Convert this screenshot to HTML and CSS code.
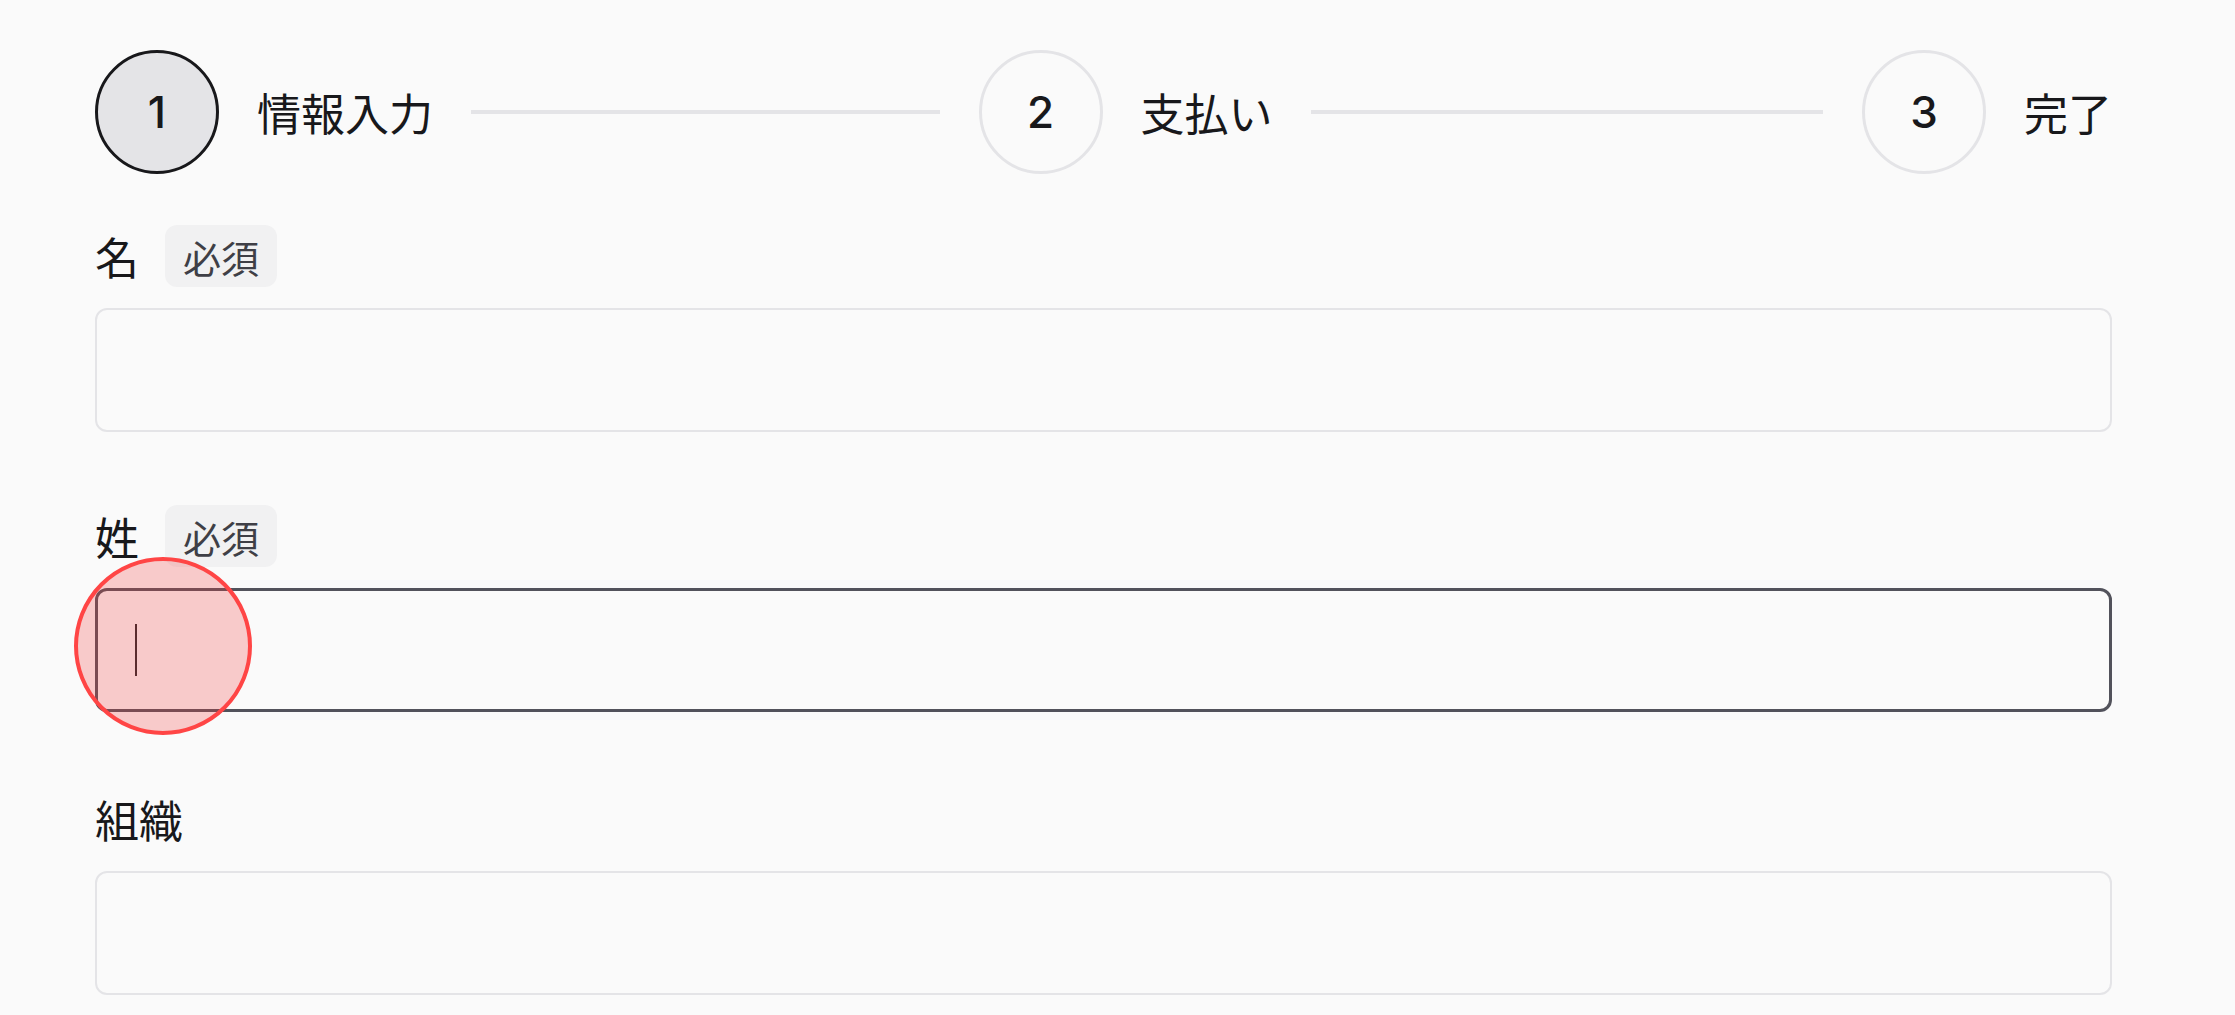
FILE: index.html
```html
<!DOCTYPE html>
<html lang="ja">
<head>
<meta charset="utf-8">
<title>情報入力</title>
<link rel="stylesheet" href="styles.css">
</head>
<body>
<div class="page">
  <div class="stepper">
    <div class="step">
      <div class="step-circle active">1</div>
      <div class="step-label">情報入力</div>
      <div class="step-line"></div>
    </div>
    <div class="step">
      <div class="step-circle">2</div>
      <div class="step-label">支払い</div>
      <div class="step-line"></div>
    </div>
    <div class="step last">
      <div class="step-circle">3</div>
      <div class="step-label">完了</div>
    </div>
  </div>

  <form class="form">
    <div class="field">
      <div class="field-label"><span class="label-text">名</span><span class="badge">必須</span></div>
      <div class="input"></div>
    </div>
    <div class="field field-focused">
      <div class="field-label"><span class="label-text">姓</span><span class="badge">必須</span></div>
      <div class="input focused"><span class="caret"></span><span class="touch"></span></div>
    </div>
    <div class="field">
      <div class="field-label"><span class="label-text">組織</span></div>
      <div class="input"></div>
    </div>
  </form>
</div>
</body>
</html>
```
FILE: styles.css
```css
* { box-sizing: border-box; }
html, body { margin: 0; padding: 0; }
body {
  background: #fafafa;
  color: #18181b;
  font-family: "Noto Sans CJK JP", "Noto Sans", sans-serif;
  overflow: hidden;
}
.page {
  padding: 50px 123px 0 95px;
}
.stepper {
  display: flex;
  align-items: center;
  height: 124px;
}
.step {
  display: flex;
  align-items: center;
  flex: 1;
}
.step.last { flex: none; }
.step-circle {
  width: 124px;
  height: 124px;
  border-radius: 50%;
  border: 3px solid #e4e4e7;
  display: flex;
  align-items: center;
  justify-content: center;
  font-family: Inter, "Noto Sans", sans-serif;
  font-size: 44px;
  font-weight: 500;
  color: #18181b;
  flex: none;
}
.step-circle.active {
  background: #e4e4e7;
  border: 3.5px solid #18181b;
}
.step-label {
  margin-left: 38px;
  font-size: 44px;
  line-height: 1;
  color: #18181b;
  white-space: nowrap;
}
.step-line {
  flex: 1;
  height: 4px;
  background: #e4e4e7;
  margin: 0 39px 0 38px;
}
.form {
  margin-top: 51px;
  display: flex;
  flex-direction: column;
}
.field + .field { margin-top: 73px; }
.field-focused { margin-bottom: 3px; }
.field-label {
  height: 62px;
  display: flex;
  align-items: center;
  gap: 26px;
}
.label-text {
  font-size: 44px;
  line-height: 1;
  color: #18181b;
}
.badge {
  height: 62px;
  display: flex;
  align-items: center;
  padding: 0 18px;
  border-radius: 12px;
  background: #f1f1f2;
  font-size: 38px;
  color: #3f3f46;
}
.input {
  margin-top: 21px;
  height: 124px;
  border: 2px solid #e4e4e7;
  border-radius: 12px;
  background: #fafafa;
  display: flex;
  align-items: center;
  padding-left: 38px;
  position: relative;
}
.input.focused {
  border: 3px solid #52525b;
  padding-left: 37px;
}
.caret {
  display: block;
  width: 2px;
  height: 52px;
  background: #27272a;
}
.touch {
  position: absolute;
  left: -24px;
  top: -34px;
  width: 178px;
  height: 178px;
  border-radius: 50%;
  border: 4px solid #ff4545;
  background: rgba(242, 60, 60, 0.25);
}
```
